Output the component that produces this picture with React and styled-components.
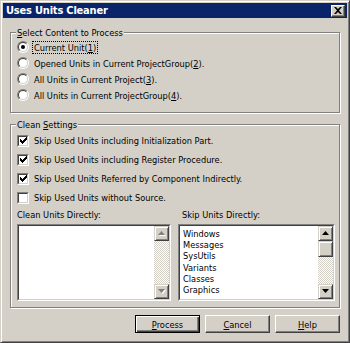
import React from "react";
import styled, { createGlobalStyle } from "styled-components";

const GlobalStyle = createGlobalStyle`
  html, body { margin: 0; padding: 0; background: #d4d0c8; }
  body {
    font-family: "DejaVu Sans Condensed", "DejaVu Sans", sans-serif;
    font-size: 9.2px;
    color: #000;
  }
`;

const Window = styled.div`
  width: 350px;
  height: 343px;
  box-sizing: border-box;
  background: #d4d0c8;
  border: 1px solid;
  border-color: #d4d0c8 #404040 #404040 #d4d0c8;
  box-shadow: inset 1px 1px 0 #fff, inset -1px -1px 0 #808080;
  padding: 2px;
  display: flex;
  flex-direction: column;
`;

const TitleBar = styled.div`
  height: 15px;
  background: #0a246a;
  display: flex;
  align-items: center;
  justify-content: space-between;
  padding: 0 2px 0 3px;
`;

const Title = styled.span`
  color: #fff;
  font-weight: bold;
  font-size: 11px;
  letter-spacing: -0.2px;
`;

const CloseBtn = styled.button`
  width: 14px;
  height: 12px;
  padding: 0;
  margin: 0;
  background: #d4d0c8;
  border: 1px solid;
  border-color: #fff #404040 #404040 #fff;
  box-shadow: inset -1px -1px 0 #808080;
  display: flex;
  align-items: center;
  justify-content: center;
`;

const Body = styled.div`
  padding: 14px 7px 0 7px;
  display: flex;
  flex-direction: column;
`;

const Frame = styled.div`
  border: 1px solid #808080;
  box-shadow: inset 1px 1px 0 #fff, 1px 1px 0 #fff;
  margin-top: ${(p) => p.$gap || 0}px;
  padding: 0 4px ${(p) => p.$bottom || 6}px 6px;
`;

const Caption = styled.div`
  display: table;
  margin: -7px 0 0 -1px;
  padding: 0 1px;
  height: 13px;
  line-height: 13px;
  background: #d4d0c8;
`;

const U = styled.span`
  text-decoration: underline;
  text-underline-offset: 1px;
`;

const OptionRow = styled.label`
  display: flex;
  align-items: center;
  height: ${(p) => p.$h}px;
  gap: 4px;
`;

const RadioOuter = styled.span`
  width: 12px;
  height: 12px;
  box-sizing: border-box;
  border-radius: 50%;
  border: 1px solid;
  border-color: #808080 #fff #fff #808080;
  display: flex;
  flex: none;
`;

const RadioInner = styled.span`
  flex: 1;
  border-radius: 50%;
  border: 1px solid;
  border-color: #404040 #d4d0c8 #d4d0c8 #404040;
  background: #fff;
  display: flex;
  align-items: center;
  justify-content: center;

  &::after {
    content: "";
    width: 4px;
    height: 4px;
    border-radius: 50%;
    background: ${(p) => (p.$on ? "#000" : "transparent")};
  }
`;

const CheckBox = styled.span`
  width: 12px;
  height: 12px;
  box-sizing: border-box;
  flex: none;
  border: 1px solid;
  border-color: #808080 #fff #fff #808080;
  display: flex;
`;

const CheckInner = styled.span`
  flex: 1;
  border: 1px solid;
  border-color: #404040 #d4d0c8 #d4d0c8 #404040;
  background: #fff;
  display: flex;
  align-items: center;
  justify-content: center;
`;

const Text = styled.span`
  line-height: 11px;
  padding: 0 1px;
  border: 1px dotted ${(p) => (p.$focus ? "#000" : "transparent")};
  margin-left: -1px;
`;

const ListsArea = styled.div`
  display: grid;
  grid-template-columns: 154px 157px;
  column-gap: 7px;
`;

const ListLabel = styled.div`
  height: 17px;
  line-height: 16px;
  padding-left: ${(p) => p.$indent || 0}px;
`;

const ListBox = styled.div`
  height: 77px;
  box-sizing: border-box;
  border: 1px solid;
  border-color: #808080 #fff #fff #808080;
  display: flex;
`;

const ListInner = styled.div`
  flex: 1;
  display: flex;
  border: 1px solid;
  border-color: #404040 #d4d0c8 #d4d0c8 #404040;
  background: #fff;
  min-width: 0;
`;

const Items = styled.ul`
  flex: 1;
  margin: 0;
  padding: 2px 0 0 3px;
  list-style: none;
  overflow: hidden;
`;

const Item = styled.li`
  height: 11.2px;
  line-height: 11px;
`;

const ScrollBar = styled.div`
  width: 15px;
  display: flex;
  flex-direction: column;
  background: repeating-conic-gradient(#fff 0 25%, #d4d0c8 0 50%) 0 0 / 2px 2px;
`;

const ScrollBtn = styled.div`
  height: 15px;
  box-sizing: border-box;
  background: #d4d0c8;
  border: 1px solid;
  border-color: #d4d0c8 #404040 #404040 #d4d0c8;
  box-shadow: inset 1px 1px 0 #fff, inset -1px -1px 0 #808080;
  display: flex;
  align-items: center;
  justify-content: center;
  flex: none;
`;

const Thumb = styled(ScrollBtn)`
  height: 16px;
`;

const Spacer = styled.div`
  flex: 1;
`;

const ButtonRow = styled.div`
  display: flex;
  justify-content: flex-end;
  gap: 5px;
  margin-top: 7px;
`;

const Button = styled.button`
  width: 65px;
  height: 18px;
  padding: 0;
  font: inherit;
  color: #000;
  background: #d4d0c8;
  box-sizing: border-box;
  border: 1px solid;
  border-color: ${(p) => (p.$default ? "#000" : "#fff #404040 #404040 #fff")};
  box-shadow: ${(p) =>
    p.$default
      ? "inset 1px 1px 0 #fff, inset -1px -1px 0 #404040, inset -2px -2px 0 #808080"
      : "inset -1px -1px 0 #808080"};
`;

const Arrow = ({ up, disabled }) => (
  <svg width="8" height="5" viewBox="0 0 8 5">
    {disabled && (
      <path d={up ? "M4.5 1 L8 5 L1 5 Z" : "M1 1 L8 1 L4.5 5 Z"} fill="#fff" />
    )}
    <path
      d={up ? "M3.5 0 L7 4 L0 4 Z" : "M0 0 L7 0 L3.5 4 Z"}
      fill={disabled ? "#808080" : "#000"}
    />
  </svg>
);

const Check = () => (
  <svg width="7" height="7" viewBox="0 0 7 7">
    <path
      d="M0 2h1v1h1v1h1v-1h1v-1h1v-1h1v-1h1v3h-1v1h-1v1h-1v1h-1v1h-1v-1h-1v-1h-1z"
      fill="#000"
    />
  </svg>
);

const Radio = ({ on, focus, children }) => (
  <OptionRow $h={16}>
    <RadioOuter>
      <RadioInner $on={on} />
    </RadioOuter>
    <Text $focus={focus}>{children}</Text>
  </OptionRow>
);

const Option = ({ checked, children }) => (
  <OptionRow $h={19}>
    <CheckBox>
      <CheckInner>{checked && <Check />}</CheckInner>
    </CheckBox>
    <Text>{children}</Text>
  </OptionRow>
);

const skipUnits = ["Windows", "Messages", "SysUtils", "Variants", "Classes", "Graphics"];

export default function App() {
  return (
    <>
      <GlobalStyle />
      <Window>
        <TitleBar>
          <Title>Uses Units Cleaner</Title>
          <CloseBtn aria-label="Close">
            <svg width="8" height="7" viewBox="0 0 8 7">
              <path d="M0 0h2l2 2 2-2h2L5 3.5 8 7H6L4 5 2 7H0l3-3.5z" fill="#000" />
            </svg>
          </CloseBtn>
        </TitleBar>
        <Body>
          <Frame $bottom={9}>
            <Caption>
              <U>S</U>elect Content to Process
            </Caption>
            <Radio on focus>
              Current Unit(<U>1</U>)
            </Radio>
            <Radio>
              Opened Units in Current ProjectGroup(<U>2</U>).
            </Radio>
            <Radio>
              All Units in Current Project(<U>3</U>).
            </Radio>
            <Radio>
              All Units in Current ProjectGroup(<U>4</U>).
            </Radio>
          </Frame>
          <Frame $gap={11} $bottom={6}>
            <Caption>
              Clean <U>S</U>ettings
            </Caption>
            <Option checked>Skip Used Units including Initialization Part.</Option>
            <Option checked>Skip Used Units including Register Procedure.</Option>
            <Option checked>Skip Used Units Referred by Component Indirectly.</Option>
            <Option>Skip Used Units without Source.</Option>
            <ListsArea>
              <div>
                <ListLabel>Clean Units Directly:</ListLabel>
                <ListBox>
                  <ListInner>
                    <Items />
                    <ScrollBar>
                      <ScrollBtn>
                        <Arrow up disabled />
                      </ScrollBtn>
                      <Spacer />
                      <ScrollBtn>
                        <Arrow disabled />
                      </ScrollBtn>
                    </ScrollBar>
                  </ListInner>
                </ListBox>
              </div>
              <div>
                <ListLabel $indent={4}>Skip Units Directly:</ListLabel>
                <ListBox>
                  <ListInner>
                    <Items>
                      {skipUnits.map((u) => (
                        <Item key={u}>{u}</Item>
                      ))}
                    </Items>
                    <ScrollBar>
                      <ScrollBtn>
                        <Arrow up />
                      </ScrollBtn>
                      <Thumb />
                      <Spacer />
                      <ScrollBtn>
                        <Arrow />
                      </ScrollBtn>
                    </ScrollBar>
                  </ListInner>
                </ListBox>
              </div>
            </ListsArea>
          </Frame>
          <ButtonRow>
            <Button $default>
              <U>P</U>rocess
            </Button>
            <Button>
              <U>C</U>ancel
            </Button>
            <Button>
              <U>H</U>elp
            </Button>
          </ButtonRow>
        </Body>
      </Window>
    </>
  );
}
